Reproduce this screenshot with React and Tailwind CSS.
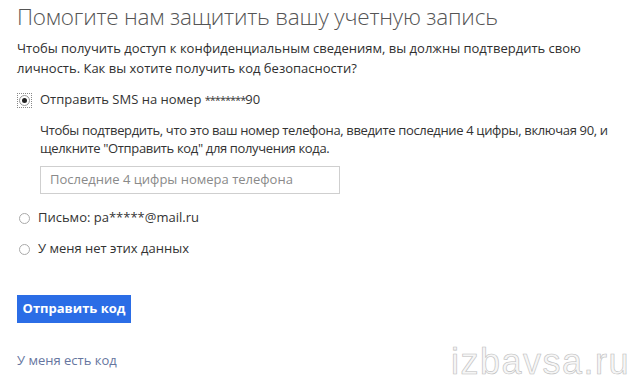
export default function App() {
  const font = { fontFamily: '"Open Sans", "Noto Sans", sans-serif' };
  return (
    <div className="relative w-[635px] h-[381px] bg-white overflow-hidden text-[#333]" style={font}>
      <div className="pl-[17px] pt-[2px]">
        <h1 className="text-[22.5px] font-light leading-[30px] text-[#555] tracking-[-0.2px] whitespace-nowrap">Помогите нам защитить вашу учетную запись</h1>
        <p className="mt-[6px] text-[13px] leading-[20px] text-[#2f2f2f] whitespace-nowrap">
          Чтобы получить доступ к конфиденциальным сведениям, вы должны подтвердить свою<br />
          личность. Как вы хотите получить код безопасности?
        </p>
        <div className="mt-[14px] flex items-center gap-[8px] h-[16px]">
          <span className="w-[15px] h-[15px] border border-dotted border-[#888] flex items-center justify-center">
            <span className="w-[11px] h-[11px] rounded-full border border-[#999] flex items-center justify-center">
              <span className="w-[5px] h-[5px] rounded-full bg-[#222]" />
            </span>
          </span>
          <span className="text-[13px] text-[#333]">Отправить SMS на номер <span className="text-[11px] tracking-[-1px]">********</span>90</span>
        </div>
        <div className="pl-[23px] mt-[13px]">
          <p className="text-[13px] leading-[18px] text-[#333] whitespace-nowrap tracking-[-0.35px]">
            Чтобы подтвердить, что это ваш номер телефона, введите последние 4 цифры, включая 90, и<br />
            щелкните "Отправить код" для получения кода.
          </p>
          <div className="mt-[9px] w-[300px] h-[28px] border border-[#cfcfcf] flex items-center px-[9px] text-[13px] text-[#8a8a8a]">
            Последние 4 цифры номера телефона
          </div>
        </div>
        <div className="mt-[16px] flex items-center gap-[8px] h-[16px] pl-[2px]">
          <span className="w-[11px] h-[11px] rounded-full border border-[#aaa]" />
          <span className="text-[13px] text-[#333]">Письмо: pa*****@mail.ru</span>
        </div>
        <div className="mt-[15px] flex items-center gap-[8px] h-[16px] pl-[2px]">
          <span className="w-[11px] h-[11px] rounded-full border border-[#aaa]" />
          <span className="text-[13px] text-[#333]">У меня нет этих данных</span>
        </div>
        <button className="mt-[38px] w-[114px] h-[28px] bg-[#2b6de6] text-white text-[13px] font-bold flex items-center justify-center">Отправить код</button>
        <div className="mt-[28px] text-[13px] text-[#6676a0]">У меня есть код</div>
      </div>
      <div className="absolute left-[451px] top-[345px] text-[36px] leading-[34px] text-[#f6f6f6] tracking-[1.5px]" style={{ fontFamily: '"Liberation Sans", sans-serif', WebkitTextStroke: '0.6px #bdbdbd' }}>izbavsa.ru</div>
    </div>
  );
}
